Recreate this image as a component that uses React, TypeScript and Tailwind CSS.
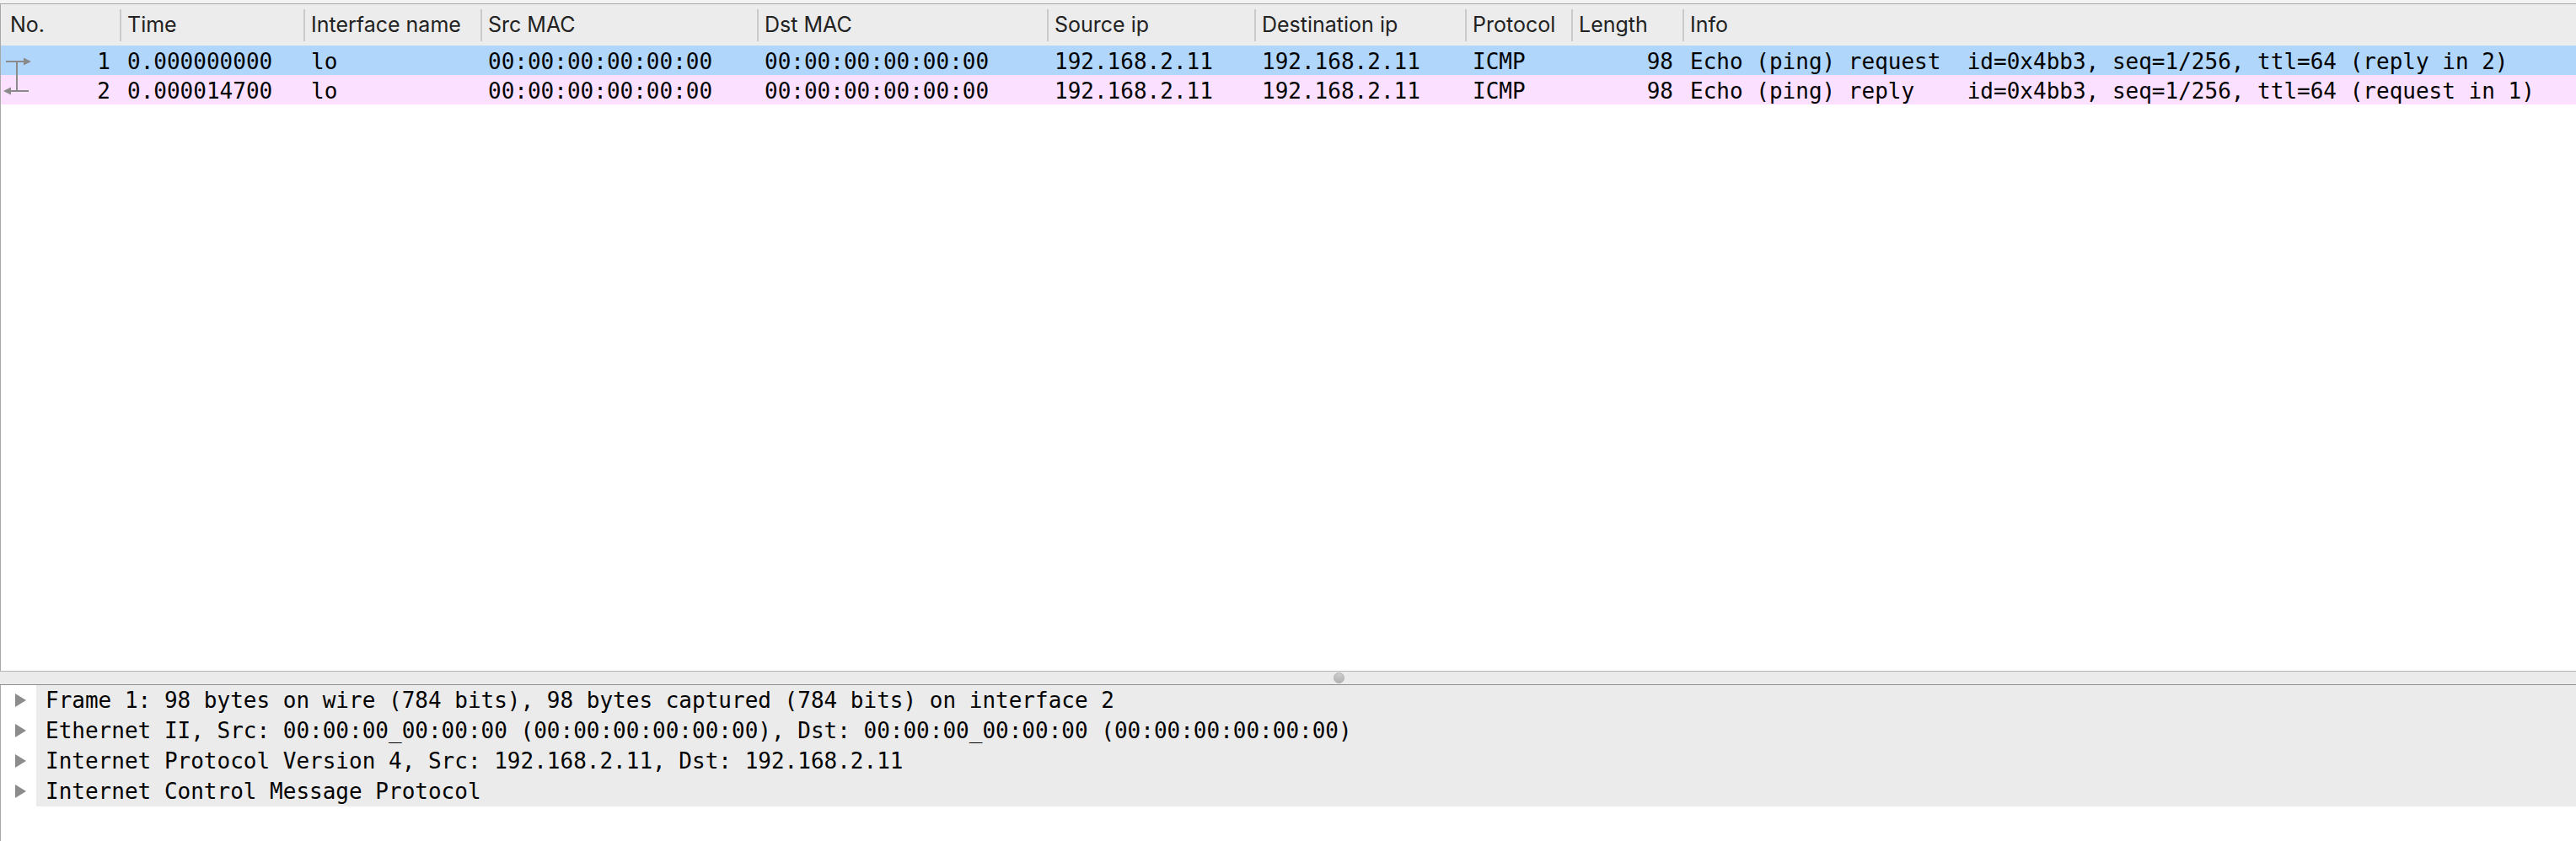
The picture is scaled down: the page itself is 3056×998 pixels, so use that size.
import React from 'react';

type Packet = {
  no: number;
  time: string;
  iface: string;
  srcMac: string;
  dstMac: string;
  src: string;
  dst: string;
  proto: string;
  len: number;
  info: string;
  bg: string;
  dir: 'req' | 'rep';
};

const columns = [
  'No.',
  'Time',
  'Interface name',
  'Src MAC',
  'Dst MAC',
  'Source ip',
  'Destination ip',
  'Protocol',
  'Length',
  'Info',
];

const packets: Packet[] = [
  {
    no: 1,
    time: '0.000000000',
    iface: 'lo',
    srcMac: '00:00:00:00:00:00',
    dstMac: '00:00:00:00:00:00',
    src: '192.168.2.11',
    dst: '192.168.2.11',
    proto: 'ICMP',
    len: 98,
    info: 'Echo (ping) request  id=0x4bb3, seq=1/256, ttl=64 (reply in 2)',
    bg: 'bg-[#b0d6fc]',
    dir: 'req',
  },
  {
    no: 2,
    time: '0.000014700',
    iface: 'lo',
    srcMac: '00:00:00:00:00:00',
    dstMac: '00:00:00:00:00:00',
    src: '192.168.2.11',
    dst: '192.168.2.11',
    proto: 'ICMP',
    len: 98,
    info: 'Echo (ping) reply    id=0x4bb3, seq=1/256, ttl=64 (request in 1)',
    bg: 'bg-[#fce0ff]',
    dir: 'rep',
  },
];

const details = [
  'Frame 1: 98 bytes on wire (784 bits), 98 bytes captured (784 bits) on interface 2',
  'Ethernet II, Src: 00:00:00_00:00:00 (00:00:00:00:00:00), Dst: 00:00:00_00:00:00 (00:00:00:00:00:00)',
  'Internet Protocol Version 4, Src: 192.168.2.11, Dst: 192.168.2.11',
  'Internet Control Message Protocol',
];

const grid =
  'grid grid-cols-[141px_218px_210px_328px_344px_246px_250px_126px_132px_1fr]';

function RelatedArrow({ dir }: { dir: 'req' | 'rep' }) {
  if (dir === 'req') {
    return (
      <svg width="40" height="35" viewBox="0 0 40 35" className="absolute left-0 top-0">
        <line x1="6" y1="19" x2="28" y2="19" stroke="#8a8a8a" strokeWidth="2" />
        <polygon points="27,14.5 36,19 27,23.5" fill="#8a8a8a" />
        <line x1="19" y1="19" x2="19" y2="35" stroke="#8a8a8a" strokeWidth="2" />
      </svg>
    );
  }
  return (
    <svg width="40" height="35" viewBox="0 0 40 35" className="absolute left-0 top-0">
      <line x1="19" y1="0" x2="19" y2="19" stroke="#8a8a8a" strokeWidth="2" />
      <line x1="11" y1="19" x2="33" y2="19" stroke="#8a8a8a" strokeWidth="2" />
      <polygon points="12,14.5 3,19 12,23.5" fill="#8a8a8a" />
    </svg>
  );
}

function PacketRow({ p }: { p: Packet }) {
  const cell = 'pl-[9px] whitespace-pre overflow-hidden';
  return (
    <div className={`${grid} h-[35px] items-center ${p.bg} font-['DejaVu_Sans_Mono',monospace] text-[26px] text-black`}>
      <div className="relative h-full flex items-center justify-end pr-[11px]">
        <RelatedArrow dir={p.dir} />
        {p.no}
      </div>
      <div className={cell}>{p.time}</div>
      <div className={cell}>{p.iface}</div>
      <div className={cell}>{p.srcMac}</div>
      <div className={cell}>{p.dstMac}</div>
      <div className={cell}>{p.src}</div>
      <div className={cell}>{p.dst}</div>
      <div className={cell}>{p.proto}</div>
      <div className="text-right pr-[11px]">{p.len}</div>
      <div className={cell}>{p.info}</div>
    </div>
  );
}

export default function App() {
  return (
    <div className="w-[3056px] h-[998px] flex flex-col bg-white overflow-hidden">
      <div className="h-[4px] bg-[#f3f3f3]" />

      {/* packet list */}
      <div className="h-[792px] border-t border-l border-[#a9a9a9] bg-white">
        <div className={`${grid} h-[49px] bg-[#ececec] items-center font-['Inter',sans-serif] text-[25px] text-[#222]`}>
          {columns.map((c, i) => (
            <div
              key={c}
              className={
                i === 0
                  ? 'pl-[11px] h-[38px] flex items-center'
                  : 'pl-[7px] h-[38px] flex items-center border-l-2 border-[#cacaca]'
              }
            >
              {c}
            </div>
          ))}
        </div>
        {packets.map((p) => (
          <PacketRow key={p.no} p={p} />
        ))}
      </div>

      {/* splitter */}
      <div className="relative h-[17px] bg-[#ebebeb] border-t border-b border-t-[#b5b5b5] border-b-[#8f8f8f]">
        <div className="absolute left-[1582px] top-[1px] w-[13px] h-[13px] rounded-full bg-gradient-to-b from-[#cdcdcd] to-[#b2b2b2] border border-[#b0b0b0]" />
      </div>

      {/* packet details */}
      <div className="flex-1 border-l border-[#a9a9a9] bg-white">
        {details.map((d) => (
          <div key={d} className="flex h-[36px]">
            <div className="w-[42px] bg-white flex items-center">
              <svg width="14" height="16" viewBox="0 0 14 16" className="ml-[17px]">
                <polygon points="0,0 13,8 0,16" fill="#8c8c8c" />
              </svg>
            </div>
            <div className="flex-1 bg-[#ebebeb] flex items-center pl-[11px] font-['DejaVu_Sans_Mono',monospace] text-[26px] text-black whitespace-pre">
              {d}
            </div>
          </div>
        ))}
      </div>
    </div>
  );
}
